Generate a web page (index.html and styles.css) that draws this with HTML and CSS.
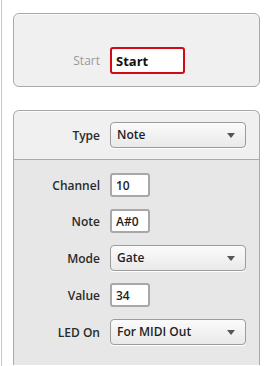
FILE: index.html
```html
<!DOCTYPE html>
<html lang="en">
<head>
<meta charset="UTF-8">
<title>MIDI Assignment</title>
<link rel="stylesheet" href="styles.css">
</head>
<body>
<div class="page">
  <div class="panel panel-start">
    <div class="row">
      <label class="label label-dim" for="start">Start</label>
      <input type="text" id="start" class="field field-name" value="Start">
    </div>
  </div>

  <div class="panel panel-assign">
    <div class="panel-head">
      <div class="row">
        <span class="label">Type</span>
        <div class="dropdown">Note<span class="arrow"></span></div>
      </div>
    </div>
    <div class="panel-body">
      <div class="row">
        <span class="label">Channel</span>
        <input type="text" class="field field-small" value="10">
      </div>
      <div class="row">
        <span class="label">Note</span>
        <input type="text" class="field field-small" value="A#0">
      </div>
      <div class="row">
        <span class="label">Mode</span>
        <div class="dropdown">Gate<span class="arrow"></span></div>
      </div>
      <div class="row">
        <span class="label">Value</span>
        <input type="text" class="field field-small" value="34">
      </div>
      <div class="row">
        <span class="label">LED On</span>
        <div class="dropdown">For MIDI Out<span class="arrow"></span></div>
      </div>
    </div>
  </div>
</div>
</body>
</html>
```

FILE: styles.css
```css
html, body {
  margin: 0;
  padding: 0;
  height: 100%;
  overflow: hidden;
}
body {
  background-color: #fff;
  font-family: "Open Sans", "DejaVu Sans", sans-serif;
  font-size: 12px;
  color: #2b2b2b;
}
.page {
  margin-left: 1px;
  border-left: 1px solid #c8c8c8;
  height: 100%;
  box-sizing: border-box;
  padding: 13px 11px 0 11px;
}
.panel {
  border: 1px solid #a9a9a9;
  border-radius: 6px;
  background-color: #f0f0f0;
  box-shadow: inset 0 1px 0 #fafafa;
}
.panel-start {
  height: 74px;
  box-sizing: border-box;
  padding-top: 33px;
}
.panel-assign {
  margin-top: 23px;
  border-bottom: none;
  border-radius: 6px 6px 0 0;
  overflow: hidden;
}
.panel-head {
  padding: 11px 0;
  border-bottom: 1px solid #a9a9a9;
}
.panel-body {
  background-color: #e7e7e7;
  padding: 13px 0 20px 0;
  display: flex;
  flex-direction: column;
  gap: 12px;
}
.row {
  display: grid;
  grid-template-columns: 86px auto;
  column-gap: 10px;
  align-items: center;
}
.label {
  text-align: right;
  font-weight: 600;
  color: #2a2a2a;
}
.label-dim {
  font-weight: 400;
  color: #9a9a9a;
}
.field {
  font-family: inherit;
  font-size: 12px;
  font-weight: 600;
  color: #1e1e1e;
  background-color: #fff;
  border: 2px solid #a8a8a8;
  border-radius: 3px;
  padding: 0 0 0 4px;
  margin: 0;
  box-sizing: border-box;
  outline: none;
}
.field-small {
  width: 40px;
  height: 24px;
}
.field-name {
  width: 75px;
  height: 27px;
  font-size: 13px;
  font-weight: 700;
  border-color: #d10a16;
  color: #111;
}
.dropdown {
  position: relative;
  width: 136px;
  height: 26px;
  box-sizing: border-box;
  border: 1px solid #9c9c9c;
  border-radius: 4px;
  background: linear-gradient(#fbfbfb, #e9e9e9);
  box-shadow: 0 1px 0 #fff;
  font-weight: 600;
  font-size: 12px;
  line-height: 24px;
  padding-left: 6px;
  color: #1e1e1e;
}
.arrow {
  position: absolute;
  right: 10px;
  top: 10px;
  width: 0;
  height: 0;
  border-left: 4px solid transparent;
  border-right: 4px solid transparent;
  border-top: 5px solid #555;
}
```
